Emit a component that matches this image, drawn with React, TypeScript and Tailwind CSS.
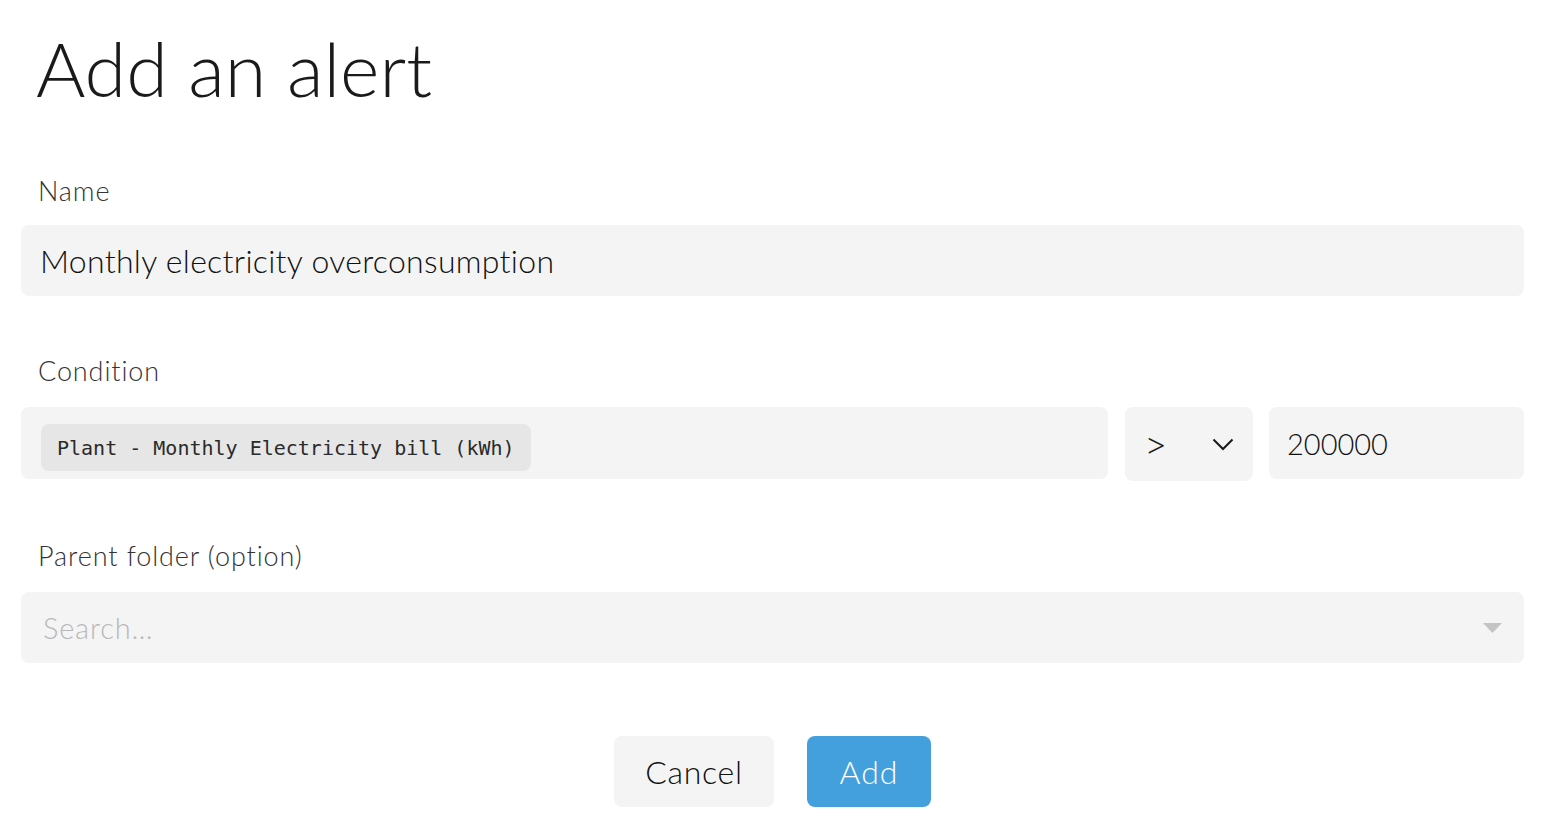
import React from "react";

export default function App() {
  return (
    <div className="min-h-[840px] bg-white pl-[21px] pr-[28px] pt-[30px] font-['Lato',sans-serif] text-[#1a1a1a]">
      <h1 className="ml-[15px] text-[75.5px] font-light leading-[76px]">Add an alert</h1>

      <div className="ml-[17px] mt-[71px] text-[27px] font-light leading-[27px] tracking-[0.9px] text-[#333]">Name</div>
      <div className="mt-[21px] flex h-[71px] items-center rounded-lg bg-[#f4f4f4] px-[19px]">
        <span className="text-[32px] font-light leading-none tracking-[0.3px] text-[#111]">Monthly electricity overconsumption</span>
      </div>

      <div className="ml-[17px] mt-[61px] text-[27px] font-light leading-[27px] tracking-[0.9px] text-[#333]">Condition</div>
      <div className="mt-[23px] flex items-start">
        <div className="flex h-[72px] flex-1 items-start rounded-lg bg-[#f4f4f4] pl-[20px] pt-[17px]">
          <span className="flex h-[47px] items-center rounded-lg bg-[#e6e6e6] px-[16px] font-['DejaVu_Sans_Mono',monospace] text-[20px] font-normal leading-none text-[#2a2a2a]">
            Plant - Monthly Electricity bill (kWh)
          </span>
        </div>
        <div className="ml-[17px] flex h-[74px] w-[128px] items-center rounded-lg bg-[#f4f4f4] pl-[19px] pr-[19px]">
          <span className="text-[40px] font-light leading-none text-[#1a1a1a]">&gt;</span>
          <svg className="ml-auto" width="22" height="13" viewBox="0 0 22 13" fill="none">
            <path d="M1.5 1.5 L11 11 L20.5 1.5" stroke="#1a1a1a" strokeWidth="2" />
          </svg>
        </div>
        <div className="ml-[16px] flex h-[72px] w-[255px] items-center rounded-lg bg-[#f4f4f4] px-[18px]">
          <span className="text-[29px] font-light leading-none text-[#111]">200000</span>
        </div>
      </div>

      <div className="ml-[17px] mt-[61px] text-[27px] font-light leading-[27px] tracking-[0.9px] text-[#333]">Parent folder (option)</div>
      <div className="mt-[23px] flex h-[71px] items-center rounded-lg bg-[#f4f4f4] pl-[22px] pr-[22px]">
        <span className="text-[29px] font-light leading-none tracking-[0.8px] text-[#b8b8b8]">Search…</span>
        <svg className="ml-auto" width="19" height="10" viewBox="0 0 19 10">
          <path d="M0 0 L19 0 L9.5 10 Z" fill="#c4c4c4" />
        </svg>
      </div>

      <div className="mt-[73px] flex justify-center gap-[33px]">
        <button className="flex h-[71px] w-[160px] items-center justify-center rounded-lg bg-[#f4f4f4] text-[32px] font-light leading-none tracking-[0.7px] text-[#111]">
          Cancel
        </button>
        <button className="flex h-[71px] w-[124px] items-center justify-center rounded-lg bg-[#449fdd] text-[32px] font-light leading-none tracking-[1px] text-white">
          Add
        </button>
      </div>
    </div>
  );
}
